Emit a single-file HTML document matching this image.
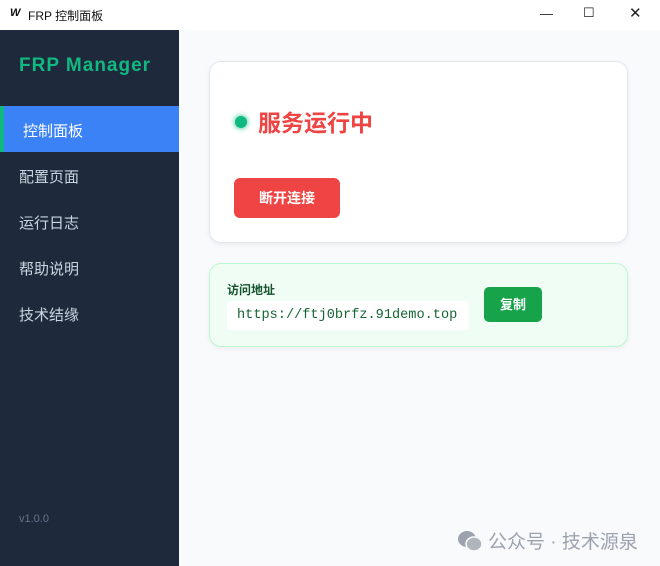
<!DOCTYPE html>
<html><head><meta charset="utf-8"><style>
*{margin:0;padding:0;box-sizing:border-box}
body{width:660px;height:566px;overflow:hidden;font-family:"Liberation Sans","Noto Sans CJK SC",sans-serif;background:#f8fafc;position:relative}
.title{position:absolute;left:0;top:0;width:660px;height:30px;background:#fff;font-size:12px;color:#111}
.title .t{position:absolute;left:28px;top:7px}
.title .w{position:absolute;left:10px;top:7px;font-weight:bold;font-style:italic;font-size:11px}
.ctl{position:absolute;top:6px;font-size:13px;color:#222}
.side{position:absolute;left:0;top:30px;width:179px;height:536px;background:#1e293b}
.logo{position:absolute;left:19px;top:25px;font-size:19px;font-weight:bold;color:#10b981;letter-spacing:1px}
.nav{position:absolute;left:0;width:179px;height:46px;color:#cbd5e1;font-size:15px;padding:14px 0 0 19px}
.nav.a{background:#3b82f6;color:#fff;border-left:4px solid #10b981;padding-left:19px}
.ver{position:absolute;left:19px;top:483px;font-size:11px;color:#64748b}
.card{position:absolute;left:209px;top:61px;width:419px;height:182px;background:#fff;border:1px solid #e2e8f0;border-radius:12px;box-shadow:0 2px 6px rgba(0,0,0,.06)}
.dot{position:absolute;left:25px;top:54px;width:12px;height:12px;border-radius:50%;background:#10b981;box-shadow:0 0 6px #10b981}
.st{position:absolute;left:48px;top:42px;font-size:23px;font-weight:bold;color:#ef4444}
.btn{position:absolute;left:24px;top:116px;width:106px;height:40px;background:#ef4444;color:#fff;border-radius:6px;font-size:14px;font-weight:bold;text-align:center;line-height:40px}
.acc{position:absolute;left:209px;top:263px;width:419px;height:84px;background:#f0fdf4;border:1px solid #bbf7d0;border-radius:12px;box-shadow:0 2px 6px rgba(0,0,0,.05)}
.lab{position:absolute;left:17px;top:17px;font-size:12px;font-weight:bold;color:#14532d}
.url{position:absolute;left:17px;top:37px;width:242px;height:29px;background:#fff;border-radius:3px;font-family:"Liberation Mono",monospace;font-size:13.6px;color:#166534;padding:7px 0 0 10px}
.cp{position:absolute;left:274px;top:23px;width:58px;height:35px;background:#16a34a;color:#fff;border-radius:5px;font-size:13px;font-weight:bold;text-align:center;line-height:35px}
.wm{position:absolute;left:488px;top:527px;font-size:19px;color:#9ca3af}
</style></head><body>
<div class="title"><span class="w">W</span><span class="t">FRP 控制面板</span>
<span class="ctl" style="left:540px">—</span><span class="ctl" style="left:583px;top:5px">☐</span><span class="ctl" style="left:629px;top:4px;font-size:15px">✕</span></div>
<div class="side">
<div class="logo">FRP Manager</div>
<div class="nav a" style="top:76px">控制面板</div>
<div class="nav" style="top:122px">配置页面</div>
<div class="nav" style="top:168px">运行日志</div>
<div class="nav" style="top:214px">帮助说明</div>
<div class="nav" style="top:260px">技术结缘</div>
<div class="ver">v1.0.0</div>
</div>
<div class="card"><div class="dot"></div><div class="st">服务运行中</div><div class="btn">断开连接</div></div>
<div class="acc"><div class="lab">访问地址</div><div class="url">https://ftj0brfz.91demo.top</div><div class="cp">复制</div></div>
<svg style="position:absolute;left:457px;top:530px" width="26" height="22"><ellipse cx="10" cy="9" rx="9" ry="8" fill="#9ca3af"/><ellipse cx="17" cy="14" rx="8" ry="7" fill="#b0b5bc" stroke="#f8fafc" stroke-width="1.5"/></svg>
<div class="wm">公众号 · 技术源泉</div>
</body></html>
